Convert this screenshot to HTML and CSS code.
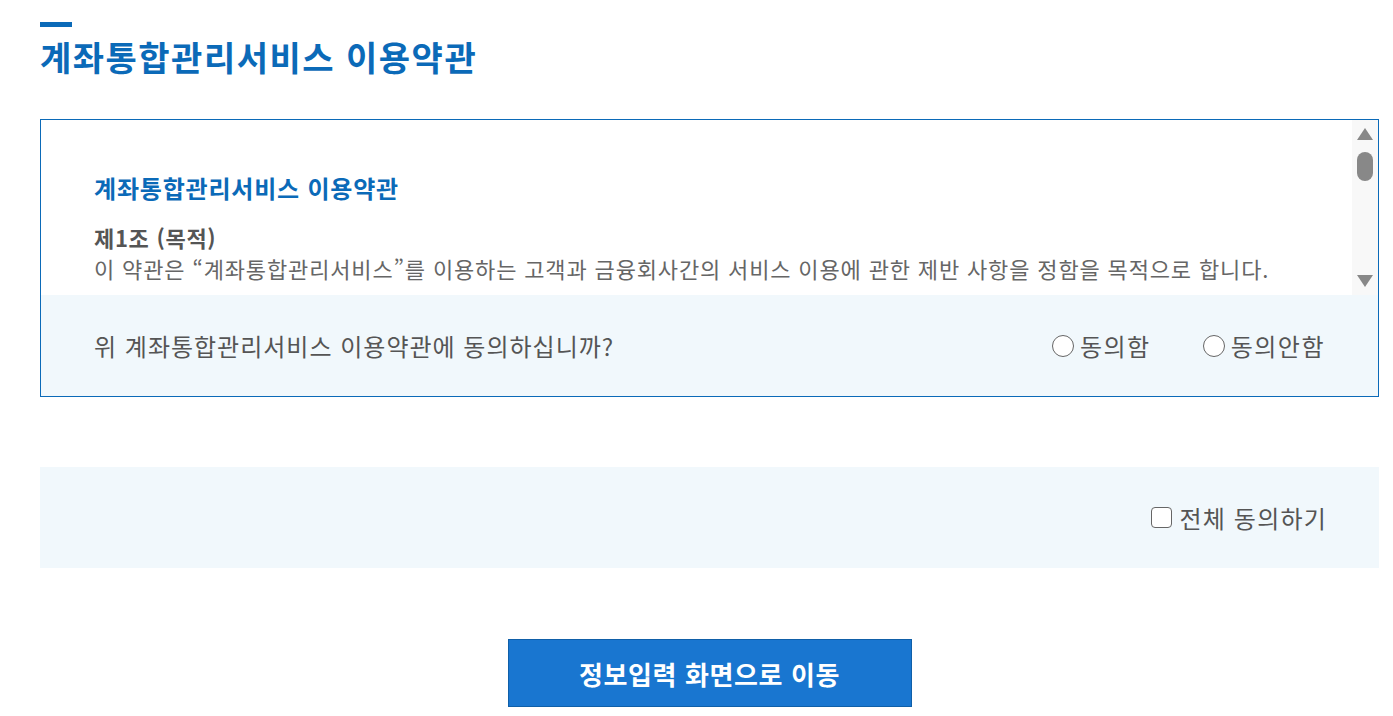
FILE: index.html
```html
<!DOCTYPE html>
<html lang="ko">
<head>
    <meta charset="UTF-8">
    <meta name="viewport" content="width=device-width, initial-scale=1.0">
    <title>계좌통합관리서비스 이용약관</title>
    <link rel="stylesheet" href="styles.css">
</head>
<body>
    <div class="container">
        <div class="page-header">
            <h1>계좌통합관리서비스 이용약관</h1>
        </div>

        <div class="terms-box">
            <div class="terms-scroll">
                <div class="terms-content">
                    <h2>계좌통합관리서비스 이용약관</h2>
                    <h3>제1조 (목적)</h3>
                    <p>이 약관은 “계좌통합관리서비스”를 이용하는 고객과 금융회사간의 서비스 이용에 관한 제반 사항을 정함을 목적으로 합니다.</p>
                </div>
                <div class="scrollbar">
                    <span class="arrow arrow-up"></span>
                    <span class="thumb"></span>
                    <span class="track"></span>
                    <span class="arrow arrow-down"></span>
                </div>
            </div>
            <div class="agree-row">
                <p class="agree-question">위 계좌통합관리서비스 이용약관에 동의하십니까?</p>
                <div class="agree-options">
                    <label class="option"><span class="radio"></span>동의함</label>
                    <label class="option"><span class="radio"></span>동의안함</label>
                </div>
            </div>
        </div>

        <div class="agree-all">
            <label class="option"><span class="checkbox"></span>전체 동의하기</label>
        </div>

        <div class="form-actions">
            <button type="button" class="btn">정보입력 화면으로 이동</button>
        </div>
    </div>
</body>
</html>
```

FILE: styles.css
```css
:root {
    --primary-color: #0b6ab8;
    --btn-color: #1976d0;
    --text-color: #555;
    --light-bg: #f1f8fc;
}

* {
    margin: 0;
    padding: 0;
    box-sizing: border-box;
}

body {
    font-family: "Noto Sans CJK KR", "Noto Sans", sans-serif;
    color: var(--text-color);
    background-color: #fff;
}

.container {
    padding: 22px 14px 0 40px;
}

.page-header::before {
    content: "";
    display: block;
    width: 32px;
    height: 5px;
    background-color: var(--primary-color);
}

.page-header h1 {
    margin-top: 8px;
    font-size: 34px;
    line-height: 44px;
    letter-spacing: 1.5px;
    font-weight: 700;
    color: var(--primary-color);
}

.terms-box {
    margin-top: 40px;
    border: 1px solid var(--primary-color);
}

.terms-scroll {
    display: flex;
    height: 175px;
    overflow: hidden;
}

.terms-content {
    flex: 1;
    padding: 50px 53px 0;
}

.terms-content h2 {
    font-size: 24px;
    line-height: 36px;
    letter-spacing: 0.8px;
    font-weight: 700;
    color: var(--primary-color);
    margin-bottom: 16px;
}

.terms-content h3 {
    font-size: 22px;
    line-height: 30px;
    letter-spacing: 0.7px;
    font-weight: 700;
    color: #555;
}

.terms-content p {
    font-size: 22px;
    line-height: 32px;
    letter-spacing: 0.85px;
    color: #666;
}

.scrollbar {
    width: 26px;
    display: flex;
    flex-direction: column;
    align-items: center;
    padding: 8px 0;
    background-color: #f8f8f8;
}

.arrow {
    width: 0;
    height: 0;
    border-left: 8px solid transparent;
    border-right: 8px solid transparent;
}

.arrow-up {
    border-bottom: 12px solid #888;
}

.arrow-down {
    border-top: 12px solid #888;
}

.thumb {
    margin-top: 12px;
    width: 16px;
    height: 29px;
    border-radius: 8px;
    background-color: #888;
}

.track {
    flex: 1;
}

.agree-row {
    display: flex;
    align-items: center;
    justify-content: space-between;
    height: 101px;
    padding: 0 53px;
    background-color: var(--light-bg);
}

.agree-question {
    font-size: 24px;
    letter-spacing: 1px;
    color: #555;
}

.agree-options {
    display: flex;
    gap: 52px;
}

.option {
    display: flex;
    align-items: center;
    gap: 6px;
    font-size: 24px;
    letter-spacing: 1.5px;
    color: #555;
    cursor: pointer;
}

.radio {
    width: 22px;
    height: 22px;
    border: 1.5px solid #666;
    border-radius: 50%;
    background-color: #fff;
}

.checkbox {
    width: 21px;
    height: 21px;
    margin-right: 1px;
    border: 1.5px solid #666;
    border-radius: 4px;
    background-color: #fff;
}

.agree-all {
    display: flex;
    justify-content: flex-end;
    align-items: center;
    margin-top: 70px;
    height: 101px;
    padding: 0 52px;
    background-color: var(--light-bg);
}

.agree-all .option {
    letter-spacing: 1.2px;
}

.form-actions {
    display: flex;
    justify-content: center;
    margin-top: 71px;
}

.btn {
    width: 404px;
    height: 68px;
    background-color: var(--btn-color);
    border: 1px solid #0f5fa8;
    color: #fff;
    font-family: inherit;
    font-size: 26px;
    letter-spacing: 0.6px;
    font-weight: 700;
    cursor: pointer;
}

.btn:hover {
    background-color: #1565b3;
}
```
